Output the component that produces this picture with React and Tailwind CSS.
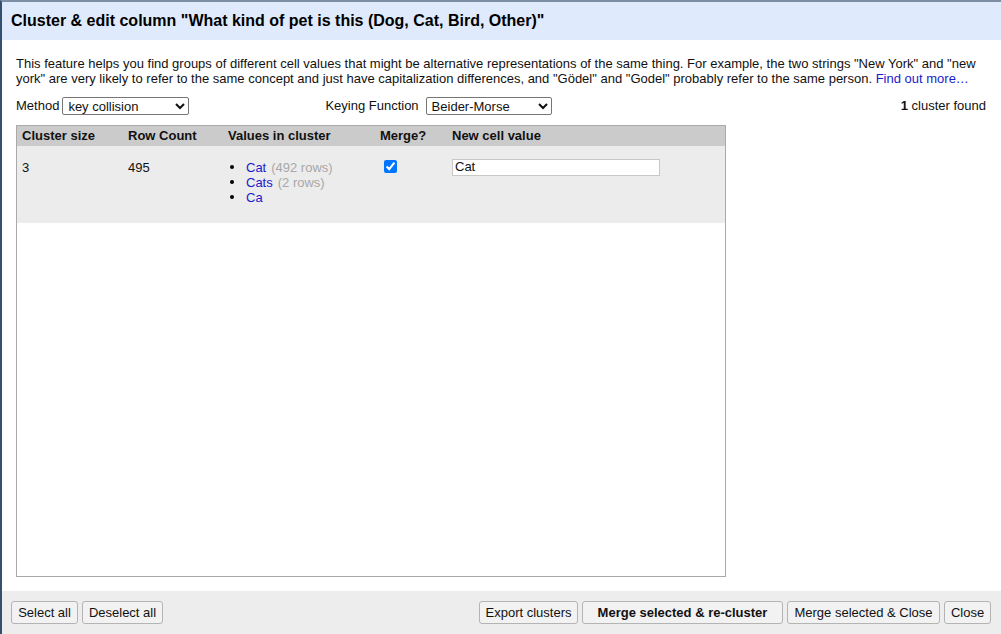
const rows = [
  { value: "Cat", count: "(492 rows)" },
  { value: "Cats", count: "(2 rows)" },
  { value: "Ca", count: "" },
];

const Btn = ({ children, bold, w }) => (
  <button
    type="button"
    className={`h-[23px] border border-[#b4b4b4] rounded-[3px] bg-[#f2f2f2] text-[13px] leading-none text-[#111] whitespace-nowrap ${w} ${
      bold ? "font-bold" : ""
    }`}
  >
    {children}
  </button>
);

const App = () => {
  return (
    <div
      className="w-[1001px] h-[634px] flex flex-col bg-white border-l-2 border-l-[#34506e] border-t-2 border-t-[#7e8ea4] text-[13px] text-[#111] overflow-hidden"
      style={{ fontFamily: '"Liberation Sans", Arial, sans-serif' }}
    >
      {/* header */}
      <div className="h-[38px] bg-[#dfeafc] flex items-center pl-[9px] shrink-0">
        <h1 className="text-[16px] font-bold text-black">
          Cluster &amp; edit column "What kind of pet is this (Dog, Cat, Bird, Other)"
        </h1>
      </div>

      {/* body */}
      <div className="flex-1 flex flex-col px-[14px] pt-[16px] pb-[14px] min-h-0">
        <p className="leading-[15px] pr-[2px]">
          This feature helps you find groups of different cell values that might be alternative representations of the
          same thing. For example, the two strings "New York" and "new york" are very likely to refer to the same concept
          and just have capitalization differences, and "Gödel" and "Godel" probably refer to the same person.{" "}
          <a className="text-[#1a1acc]">Find out more…</a>
        </p>

        <div className="flex items-center mt-[11px] h-[18px]">
          <label className="mr-[3px]">Method</label>
          <select className="w-[127px] h-[18px] border border-[#767676] rounded-[2px] text-[13px] pl-[1px] bg-white">
            <option>key collision</option>
          </select>
          <label className="ml-[136px] mr-[7px]">Keying Function</label>
          <select className="w-[126px] h-[18px] border border-[#767676] rounded-[2px] text-[13px] pl-[1px] bg-white">
            <option>Beider-Morse</option>
          </select>
          <div className="ml-auto pr-[1px]">
            <span className="font-bold">1</span> cluster found
          </div>
        </div>

        <div className="mt-[10px] w-[710px] flex-1 border border-[#aaa] bg-white">
          <table className="w-full border-collapse">
            <thead>
              <tr className="bg-[#cbcbcb] h-[19px] text-left">
                <th className="w-[106px] pl-[5px] font-bold">Cluster size</th>
                <th className="w-[100px] pl-[5px] font-bold">Row Count</th>
                <th className="w-[152px] pl-[5px] font-bold">Values in cluster</th>
                <th className="w-[72px] pl-[5px] font-bold">Merge?</th>
                <th className="pl-[5px] font-bold">New cell value</th>
              </tr>
            </thead>
            <tbody>
              <tr className="bg-[#ececec] h-[77px] align-top">
                <td className="pl-[5px] pt-[12px]">3</td>
                <td className="pl-[5px] pt-[12px]">495</td>
                <td className="pl-[5px] pt-[14px]">
                  <ul className="leading-[15px]">
                    {rows.map((r) => (
                      <li key={r.value} className="flex items-center">
                        <span className="w-[4px] h-[4px] rounded-full bg-black ml-[2px] mr-[12px]" />
                        <span className="text-[#1a1acc]">{r.value}</span>
                        {r.count && <span className="text-[#a8a8a8] ml-[5px]">{r.count}</span>}
                      </li>
                    ))}
                  </ul>
                </td>
                <td className="pl-[9px] pt-[14px]">
                  <input type="checkbox" defaultChecked className="w-[13px] h-[13px] block" />
                </td>
                <td className="pl-[5px] pt-[13px]">
                  <input
                    type="text"
                    defaultValue="Cat"
                    className="w-[208px] h-[17px] border border-[#c8c8c8] px-[2px] text-[13px] bg-white block"
                  />
                </td>
              </tr>
            </tbody>
          </table>
        </div>
      </div>

      {/* footer */}
      <div className="h-[43px] bg-[#ededed] flex items-center pl-[9px] pr-[10px] gap-[4px] shrink-0">
        <Btn w="w-[67px]">Select all</Btn>
        <Btn w="w-[81px]">Deselect all</Btn>
        <div className="ml-auto flex gap-[4px]">
          <Btn w="w-[99px]">Export clusters</Btn>
          <Btn bold w="w-[201px]">Merge selected &amp; re-cluster</Btn>
          <Btn w="w-[153px]">Merge selected &amp; Close</Btn>
          <Btn w="w-[47px]">Close</Btn>
        </div>
      </div>
    </div>
  );
};

export default App;
